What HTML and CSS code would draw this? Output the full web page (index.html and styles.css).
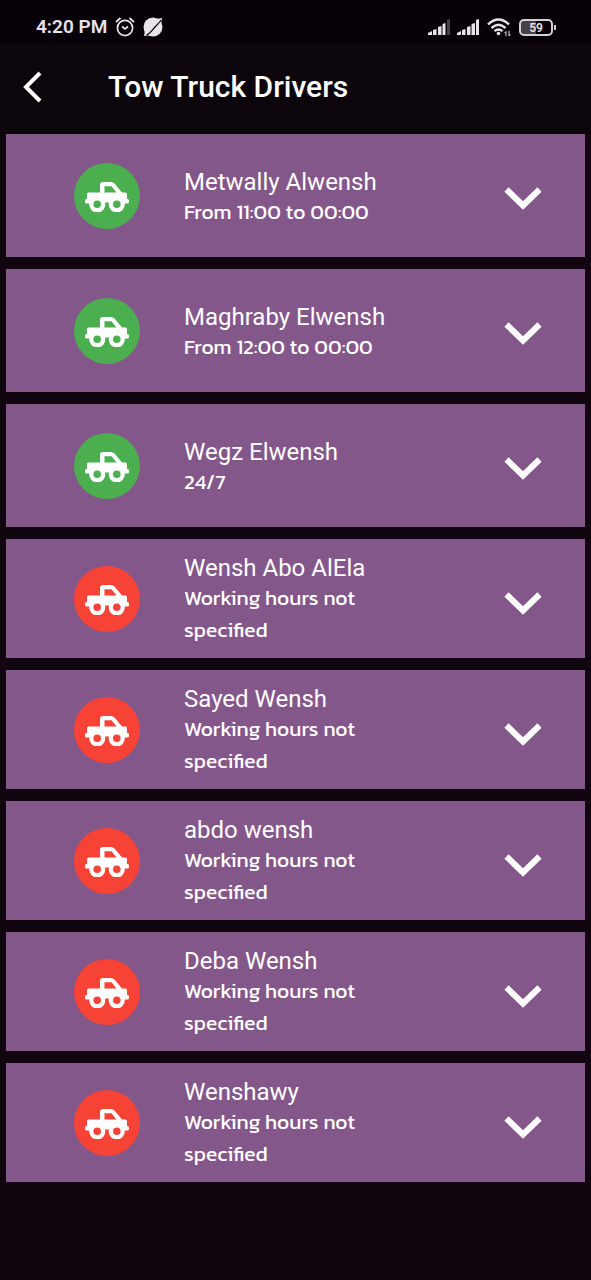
FILE: index.html
```html
<!DOCTYPE html>
<html lang="en">
<head>
<meta charset="utf-8">
<meta name="viewport" content="width=device-width, initial-scale=1">
<title>Tow Truck Drivers</title>
<link rel="stylesheet" href="styles.css">
</head>
<body>
<svg class="symbols" aria-hidden="true">
  <symbol id="truck" viewBox="0 0 44 30">
    <path fill="currentColor" fill-rule="evenodd" d="M18 0h7.500q2.500 0 4 1.600L37 10.500h3.500q1.500 0 1.500 1.500v5h.5q1.500 0 1.500 1.500v1.500q0 1.500-1.500 1.500H39.700A8 8 0 1 1 24 20.500h-4A8 8 0 1 1 4.300 21.500H1.500Q0 21.500 0 20V18.500Q0 17 1.500 17H2v-5q0-1.500 1.500-1.500H15V3q0-3 3-3zM19.500 4.200v6.300H31.500L26.500 4.200zM12.200 18.400a3.800 3.800 0 1 0 0 7.600 3.800 3.800 0 0 0 0-7.600zM31.800 18.400a3.800 3.800 0 1 0 0 7.600 3.800 3.800 0 0 0 0-7.600z"/>
  </symbol>
  <symbol id="chevron" viewBox="0 0 38 23">
    <path fill="none" stroke="currentColor" stroke-width="6" d="M2.500 2.500 19 18.500 35.500 2.500"/>
  </symbol>
</svg>
<div class="status">
  <span class="time">4:20 PM</span>
  <svg class="alarm" viewBox="0 0 20 20" aria-hidden="true"><g fill="none" stroke="currentColor" stroke-width="1.700"><circle cx="10" cy="11" r="7.600"/><path d="M1 5 5.500 1M19 5 14.500 1M7 9.500l3 2.500 3-2.500"/></g></svg>
  <svg class="planet" viewBox="0 0 20 20" aria-hidden="true"><circle cx="10" cy="10" r="9.500" fill="currentColor"/><path d="M1 19 2 13l6 5zM19 1l-6 1 5 5z" fill="currentColor"/><path d="M3.500 18C8 16 9 13 12 10S17 5 18 3" fill="none" stroke="#070008" stroke-width="1.200"/></svg>
  <span class="spacer"></span>
  <svg class="signal" viewBox="0 0 22 16" aria-hidden="true"><path fill="currentColor" d="M0 16v-2l4-2v4zM5 16v-5l3.500-1v6zM10 16V8l3.500-1v9zM14.500 16V5l3-1v12z"/><path fill="#464147" d="M19 16V1l3-1v16z"/></svg>
  <svg class="signal second" viewBox="0 0 22 16" aria-hidden="true"><path fill="currentColor" d="M0 16v-2l4-2v4zM5 16v-5l3.500-1v6zM10 16V8l3.500-1v9zM14.500 16V5l3.500-1v12zM19 16V1l3-1v16z"/></svg>
  <svg class="wifi" viewBox="0 0 24 19" aria-hidden="true"><g fill="none" stroke="currentColor" stroke-width="2.400"><path d="M1 6.500Q11.500-3.500 22 6.500M4.500 10q7-6.500 14 0M7.500 13.200q4-3.500 8 0"/></g><circle cx="11.500" cy="15.500" r="1.800" fill="currentColor"/><path d="M19 18v-4.500l-1.500 1.500M22 13v5l1.500-1.500" fill="none" stroke="currentColor"/></svg>
  <span class="battery">59</span>
</div>
<header class="bar">
  <button class="back" aria-label="Back"><svg viewBox="0 0 19 32" aria-hidden="true"><path d="M17 2 3 16l14 14" fill="none" stroke="currentColor" stroke-width="4"/></svg></button>
  <h1>Tow Truck Drivers</h1>
</header>
<main class="list">
  <button class="card"><span class="badge open"><svg><use href="#truck"/></svg></span><span class="info"><span class="name">Metwally Alwensh</span><span class="hours">From 11:00 to 00:00</span></span><svg class="chevron"><use href="#chevron"/></svg></button>
  <button class="card"><span class="badge open"><svg><use href="#truck"/></svg></span><span class="info"><span class="name">Maghraby Elwensh</span><span class="hours">From 12:00 to 00:00</span></span><svg class="chevron"><use href="#chevron"/></svg></button>
  <button class="card"><span class="badge open"><svg><use href="#truck"/></svg></span><span class="info"><span class="name">Wegz Elwensh</span><span class="hours">24/7</span></span><svg class="chevron"><use href="#chevron"/></svg></button>
  <button class="card tall"><span class="badge"><svg><use href="#truck"/></svg></span><span class="info"><span class="name">Wensh Abo AlEla</span><span class="hours">Working hours not specified</span></span><svg class="chevron"><use href="#chevron"/></svg></button>
  <button class="card tall"><span class="badge"><svg><use href="#truck"/></svg></span><span class="info"><span class="name">Sayed Wensh</span><span class="hours">Working hours not specified</span></span><svg class="chevron"><use href="#chevron"/></svg></button>
  <button class="card tall"><span class="badge"><svg><use href="#truck"/></svg></span><span class="info"><span class="name">abdo wensh</span><span class="hours">Working hours not specified</span></span><svg class="chevron"><use href="#chevron"/></svg></button>
  <button class="card tall"><span class="badge"><svg><use href="#truck"/></svg></span><span class="info"><span class="name">Deba Wensh</span><span class="hours">Working hours not specified</span></span><svg class="chevron"><use href="#chevron"/></svg></button>
  <button class="card tall"><span class="badge"><svg><use href="#truck"/></svg></span><span class="info"><span class="name">Wenshawy</span><span class="hours">Working hours not specified</span></span><svg class="chevron"><use href="#chevron"/></svg></button>
</main>
</body>
</html>
```
FILE: styles.css
```css
* { box-sizing: border-box; }
body {
  margin: 0;
  min-height: 100vh;
  background: #11060f;
  color: #fff;
  font-family: Roboto, "Liberation Sans", sans-serif;
}
button {
  border: 0;
  padding: 0;
  background: none;
  color: inherit;
  font: inherit;
  text-align: left;
  cursor: pointer;
}
svg { display: block; flex: none; }
.symbols { position: absolute; width: 0; height: 0; }
.status {
  display: flex;
  align-items: center;
  height: 44px;
  padding: 10px 35px 0 36px;
  background: #070008;
  color: #e8e4ea;
}
.time { font-size: 19px; font-weight: 600; line-height: 22px; }
.alarm { width: 20px; height: 20px; margin-left: 8px; }
.planet { width: 20px; height: 20px; margin-left: 8px; }
.spacer { flex: 1; }
.signal { width: 22px; height: 16px; }
.second { margin-left: 7px; }
.wifi { width: 24px; height: 19px; margin: 0 8px; }
.battery {
  position: relative;
  width: 34px;
  height: 17px;
  border: 2px solid #d4d0d6;
  border-radius: 5px;
  background: linear-gradient(90deg, #464147 50%, #070008 50%);
  font-size: 12px;
  font-weight: 600;
  line-height: 14px;
  text-align: center;
  margin-right: 3px;
}
.battery::after {
  content: "";
  position: absolute;
  right: -5px;
  top: 4px;
  width: 2px;
  height: 5px;
  background: #d4d0d6;
}
.bar {
  display: flex;
  align-items: center;
  gap: 66px;
  height: 90px;
  padding: 0 23px 4px;
  background: #0d050c;
}
.back svg { width: 19px; height: 32px; }
h1 { margin: 0; font-size: 30px; font-weight: 500; line-height: 36px; }
.list { display: flex; flex-direction: column; gap: 12px; padding: 0 6px 12px; }
.card {
  display: flex;
  align-items: center;
  min-height: 123px;
  padding: 0 43px 0 68px;
  background: #84578a;
}
.tall { min-height: 119px; }
.badge {
  display: flex;
  flex: none;
  align-items: center;
  justify-content: center;
  width: 66px;
  height: 66px;
  margin-right: 44px;
  border-radius: 50%;
  background: #f74336;
}
.open { background: #4bae4f; }
.badge svg { width: 44px; height: 30px; margin-top: 2px; }
.info { flex: 1; padding-top: 4px; }
.tall .info { padding-top: 2px; }
.name, .hours { display: block; }
.name { font-size: 24px; line-height: 28px; }
.hours {
  max-width: 240px;
  font-family: Kanit, "Noto Sans", sans-serif;
  font-size: 21px;
  font-weight: 400;
  line-height: 32px;
}
.tall .hours { max-width: 200px; }
.chevron { width: 38px; height: 23px; margin-top: 6px; }
.tall .chevron { margin-top: 10px; }
```
